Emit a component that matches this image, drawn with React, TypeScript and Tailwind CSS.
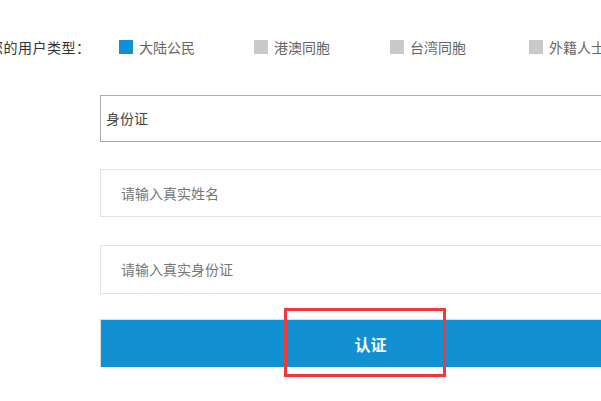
import React from "react";

const font = { fontFamily: '"Microsoft YaHei", "Noto Sans CJK SC", "Noto Sans", sans-serif' };

export default function App() {
  const types = [
    { name: "大陆公民", active: true, w: "w-[135px]" },
    { name: "港澳同胞", active: false, w: "w-[136px]" },
    { name: "台湾同胞", active: false, w: "w-[139px]" },
    { name: "外籍人士", active: false, w: "w-[140px]" },
  ];
  return (
    <div className="w-[601px] h-[401px] overflow-hidden bg-white relative" style={font}>
      <div className="flex items-center h-[20px] mt-[37px] whitespace-nowrap">
        <div className="ml-[-11px] w-[130px] shrink-0 text-[14px] text-[#333] tracking-[0.5px]">您的用户类型：</div>
        {types.map((t) => (
          <div key={t.name} className={`flex items-center shrink-0 ${t.w}`}>
            <span className={`w-[14px] h-[14px] shrink-0 ${t.active ? "bg-[#1190d3]" : "bg-[#c9c9c9]"}`} />
            <span className="ml-[6px] text-[14px] text-[#666]">{t.name}</span>
          </div>
        ))}
      </div>
      <div className="ml-[100px] w-[560px] mt-[38px] flex flex-col">
        <div className="h-[47px] border border-[#a9a9a9] flex items-center pl-[5px] text-[14px] text-[#444]">
          身份证
        </div>
        <div className="mt-[27px] h-[48px] border border-[#e3e3e3] flex items-center pl-[20px] text-[14px] text-[#777]">
          请输入真实姓名
        </div>
        <div className="mt-[28px] h-[49px] border border-[#e3e3e3] flex items-center pl-[20px] text-[14px] text-[#777]">
          请输入真实身份证
        </div>
        <div className="relative mt-[25px]">
          <div className="h-[48px] bg-[#1190d3] border-t border-l border-[#d3dde3] flex items-center justify-center pr-[20px] text-[16px] font-bold text-white">
            认证
          </div>
          <div className="absolute left-[184px] top-[-11px] w-[162px] h-[69px] border-[3px] border-[#f03a3a]" />
        </div>
      </div>
    </div>
  );
}
